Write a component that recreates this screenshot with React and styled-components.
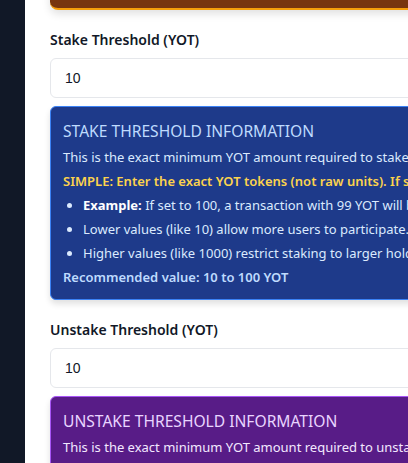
import React from "react";
import styled, { createGlobalStyle } from "styled-components";

const Global = createGlobalStyle`
  html, body { margin: 0; padding: 0; background: #ffffff; overflow: hidden; }
  body { font-family: "Noto Sans", "Open Sans", sans-serif; }
`;

const Shell = styled.div`
  display: flex;
  align-items: flex-start;
  width: 408px;
  height: 463px;
  overflow: hidden;
`;

const Sidebar = styled.aside`
  flex: 0 0 25px;
  align-self: stretch;
  background: #111827;
`;

const Main = styled.main`
  flex: 0 0 auto;
  width: 900px;
  padding-left: 25px;
  display: block;
`;

const NoticeBox = styled.div`
  margin-top: -40px;
  height: 48px;
  background: #78350f;
  border-bottom: 2px solid #f59e0b;
  border-radius: 8px;
  box-shadow: 0 4px 8px rgba(0, 0, 0, 0.12);
`;

const Field = styled.div`
  margin-top: 20px;
  display: flex;
  flex-direction: column;
`;

const Label = styled.label`
  font-size: 14px;
  line-height: 20px;
  font-weight: 600;
  color: #111827;
  margin-bottom: 8px;
`;

const Input = styled.input`
  box-sizing: border-box;
  height: 40px;
  width: 100%;
  padding: 0 14px;
  border: 1px solid #e5e7eb;
  border-radius: 6px;
  font-family: "Liberation Sans", Arial, sans-serif;
  font-size: 14px;
  color: #111827;
  background: #fff;
  outline: none;
`;

const InfoBox = styled.div`
  margin-top: 8px;
  padding: 12px 12px 10px;
  border: 1px solid ${(p) => p.$border};
  border-radius: 6px;
  background: ${(p) => p.$bg};
  color: ${(p) => p.$text};
  box-shadow: 0 4px 6px rgba(0, 0, 0, 0.12);
  white-space: nowrap;
`;

const InfoTitle = styled.h3`
  margin: 0 0 2px;
  font-size: 15.6px;
  line-height: 24px;
  font-weight: 400;
  color: ${(p) => p.$color};
  text-transform: uppercase;
`;

const Para = styled.p`
  margin: 0;
  font-size: 13px;
  line-height: 24px;
  font-weight: ${(p) => (p.$bold ? 600 : 400)};
  color: ${(p) => p.$color || "inherit"};
`;

const List = styled.ul`
  margin: 0;
  padding-left: 20px;
  font-size: 13px;
  line-height: 24px;
`;

const Item = styled.li`
  height: 24px;
  & strong { color: #ffffff; font-weight: 700; }
`;

export default function App() {
  return (
    <>
      <Global />
      <Shell>
        <Sidebar />
        <Main>
          <NoticeBox />
          <Field>
            <Label>Stake Threshold (YOT)</Label>
            <Input defaultValue="10" />
            <InfoBox $bg="#1e3a8a" $border="#3b82f6" $text="#dbeafe">
              <InfoTitle $color="#bfdbfe">Stake Threshold Information</InfoTitle>
              <Para>This is the exact minimum YOT amount required to stake tokens.</Para>
              <Para $bold $color="#fcd34d">
                SIMPLE: Enter the exact YOT tokens (not raw units). If set to 10, users need 10 YOT.
              </Para>
              <List>
                <Item>
                  <strong>Example:</strong> If set to 100, a transaction with 99 YOT will be rejected.
                </Item>
                <Item>Lower values (like 10) allow more users to participate.</Item>
                <Item>Higher values (like 1000) restrict staking to larger holders.</Item>
              </List>
              <Para $bold $color="#bfdbfe">Recommended value: 10 to 100 YOT</Para>
            </InfoBox>
          </Field>
          <Field>
            <Label>Unstake Threshold (YOT)</Label>
            <Input defaultValue="10" />
            <InfoBox $bg="#581c87" $border="#a855f7" $text="#f3e8ff">
              <InfoTitle $color="#e9d5ff">Unstake Threshold Information</InfoTitle>
              <Para>This is the exact minimum YOT amount required to unstake tokens.</Para>
              <Para $bold $color="#fcd34d">
                SIMPLE: Enter the exact YOT tokens (not raw units).
              </Para>
            </InfoBox>
          </Field>
        </Main>
      </Shell>
    </>
  );
}
